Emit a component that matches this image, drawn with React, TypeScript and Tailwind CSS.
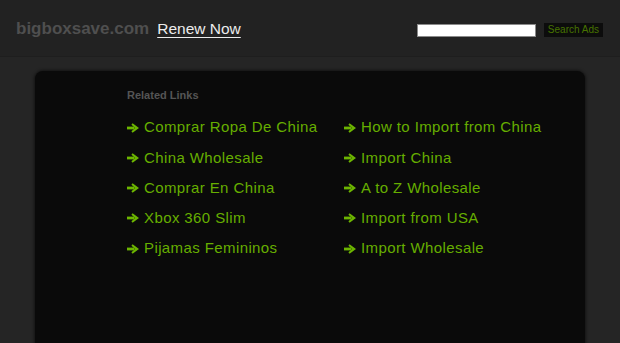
const linksLeft = [
  'Comprar Ropa De China',
  'China Wholesale',
  'Comprar En China',
  'Xbox 360 Slim',
  'Pijamas Femininos',
];

const linksRight = [
  'How to Import from China',
  'Import China',
  'A to Z Wholesale',
  'Import from USA',
  'Import Wholesale',
];

function Arrow() {
  return (
    <svg width="12" height="10" viewBox="0 0 12 10" className="mr-[5px] shrink-0">
      <path d="M0 3.6 H7.5 V6.4 H0 Z" fill="#6cb500" />
      <path d="M5.6 0.2 L12 5 L5.6 9.8 L4.4 8.3 L8.2 5 L4.4 1.7 Z" fill="#6cb500" />
    </svg>
  );
}

function LinkItem({ label }: { label: string }) {
  return (
    <a href="#" className="flex h-[30.25px] items-center text-[15px] tracking-[0.4px] text-[#66ae00]">
      <Arrow />
      {label}
    </a>
  );
}

export default function App() {
  return (
    <div className="h-[343px] overflow-hidden bg-[#252525] font-['Liberation_Sans',Arial,sans-serif]">
      <div className="flex h-[57px] items-start bg-[#222222] border-b border-[#1e1e1e]">
        <div className="flex items-center pl-4 pt-[16px]">
          <span className="text-[17px] font-bold text-[#4f4f4f]">bigboxsave.com</span>
          <a href="#" className="ml-[8px] text-[15.5px] text-[#ececec] underline underline-offset-[3px]">
            Renew Now
          </a>
        </div>
        <div className="ml-auto mr-[17px] flex items-center gap-2 pt-[23px]">
          <input
            type="text"
            className="h-[13px] w-[119px] border border-[#8a8a8a] bg-white"
          />
          <button className="h-[14px] bg-[#0c0c0c] px-[4px] text-[10px] leading-[14px] text-[#477300]">
            Search Ads
          </button>
        </div>
      </div>

      <div className="mx-[35px] mt-[14px] h-[400px] rounded-lg bg-[#0a0a0a] shadow-[0_0_3px_1px_rgba(0,0,0,0.5)] pl-[92px] pt-[16px]">
        <div className="text-[11px] font-bold text-[#555555]">Related Links</div>
        <div className="mt-[9px] flex">
          <div className="w-[217px]">
            {linksLeft.map((l) => (
              <LinkItem key={l} label={l} />
            ))}
          </div>
          <div>
            {linksRight.map((l) => (
              <LinkItem key={l} label={l} />
            ))}
          </div>
        </div>
      </div>
    </div>
  );
}
